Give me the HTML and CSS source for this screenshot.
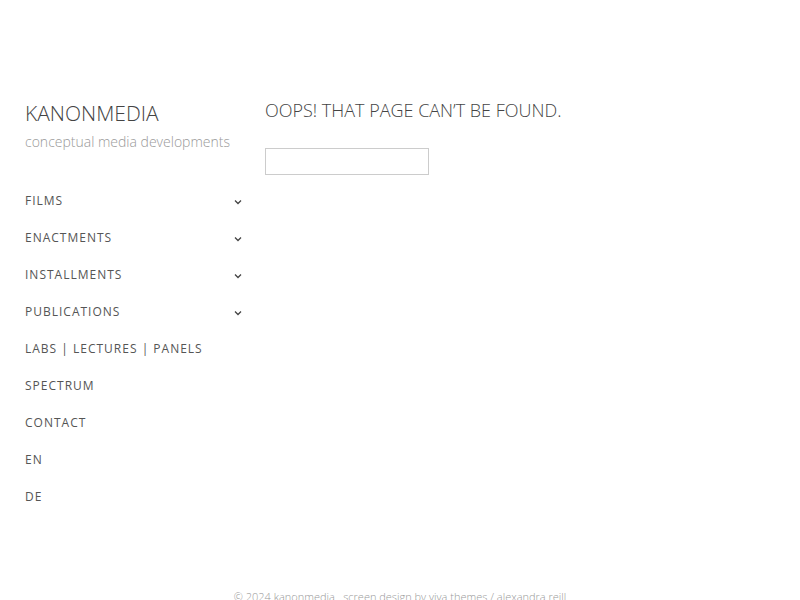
FILE: index.html
```html
<!DOCTYPE html>
<html lang="en">
<head>
<meta charset="utf-8">
<title>Page not found – kanonmedia</title>
<link rel="stylesheet" href="styles.css">
</head>
<body>
<div class="page">
  <aside class="sidebar">
    <div class="site-title">KANONMEDIA</div>
    <div class="tagline">conceptual media developments</div>
    <nav class="menu">
      <div class="item"><span>FILMS</span><svg class="chev" width="8" height="6" viewBox="0 0 8 6"><path d="M1 1.5 L4 4.5 L7 1.5" fill="none" stroke="#444" stroke-width="1.3"/></svg></div>
      <div class="item"><span>ENACTMENTS</span><svg class="chev" width="8" height="6" viewBox="0 0 8 6"><path d="M1 1.5 L4 4.5 L7 1.5" fill="none" stroke="#444" stroke-width="1.3"/></svg></div>
      <div class="item"><span>INSTALLMENTS</span><svg class="chev" width="8" height="6" viewBox="0 0 8 6"><path d="M1 1.5 L4 4.5 L7 1.5" fill="none" stroke="#444" stroke-width="1.3"/></svg></div>
      <div class="item"><span>PUBLICATIONS</span><svg class="chev" width="8" height="6" viewBox="0 0 8 6"><path d="M1 1.5 L4 4.5 L7 1.5" fill="none" stroke="#444" stroke-width="1.3"/></svg></div>
      <div class="item"><span>LABS | LECTURES | PANELS</span></div>
      <div class="item"><span>SPECTRUM</span></div>
      <div class="item"><span>CONTACT</span></div>
      <div class="item"><span>EN</span></div>
      <div class="item"><span>DE</span></div>
    </nav>
  </aside>
  <main class="content">
    <h1 class="page-title">OOPS! THAT PAGE CAN’T BE FOUND.</h1>
    <input class="search" type="search" aria-label="Search">
  </main>
</div>
<footer class="footer">© 2024 kanonmedia . screen design by viva themes / alexandra reill</footer>
</body>
</html>
```
FILE: styles.css
```css
html, body {
  margin: 0;
  padding: 0;
  background: #fff;
  font-family: "Open Sans", "Liberation Sans", sans-serif;
  color: #444;
}
.page {
  display: flex;
  gap: 20px;
  padding: 98px 0 0 25px;
  min-height: 486px;
}
.sidebar {
  width: 220px;
  flex: none;
}
.site-title {
  font-weight: 300;
  font-size: 21px;
  line-height: 30px;
  color: #444;
}
.tagline {
  font-weight: 300;
  font-size: 14px;
  line-height: 20px;
  color: #999;
  margin-top: 4px;
  white-space: nowrap;
}
.menu {
  margin-top: 30px;
  display: flex;
  flex-direction: column;
}
.item {
  display: flex;
  justify-content: space-between;
  align-items: center;
  height: 37px;
  font-size: 12px;
  letter-spacing: 1px;
  color: #555;
  white-space: nowrap;
}
.chev {
  margin-right: 3px;
  margin-top: 2px;
}
.content {
  flex: 1;
}
.page-title {
  margin: 0;
  font-weight: 300;
  font-size: 18px;
  line-height: 24px;
  color: #444;
}
.search {
  display: block;
  margin-top: 26px;
  width: 164px;
  height: 27px;
  box-sizing: border-box;
  border: 1px solid #ccc;
  padding: 0 4px;
  background: #fff;
  font-family: inherit;
}
.footer {
  text-align: center;
  font-size: 11px;
  color: #999;
  font-weight: 300;
  padding-top: 5px;
}
```
